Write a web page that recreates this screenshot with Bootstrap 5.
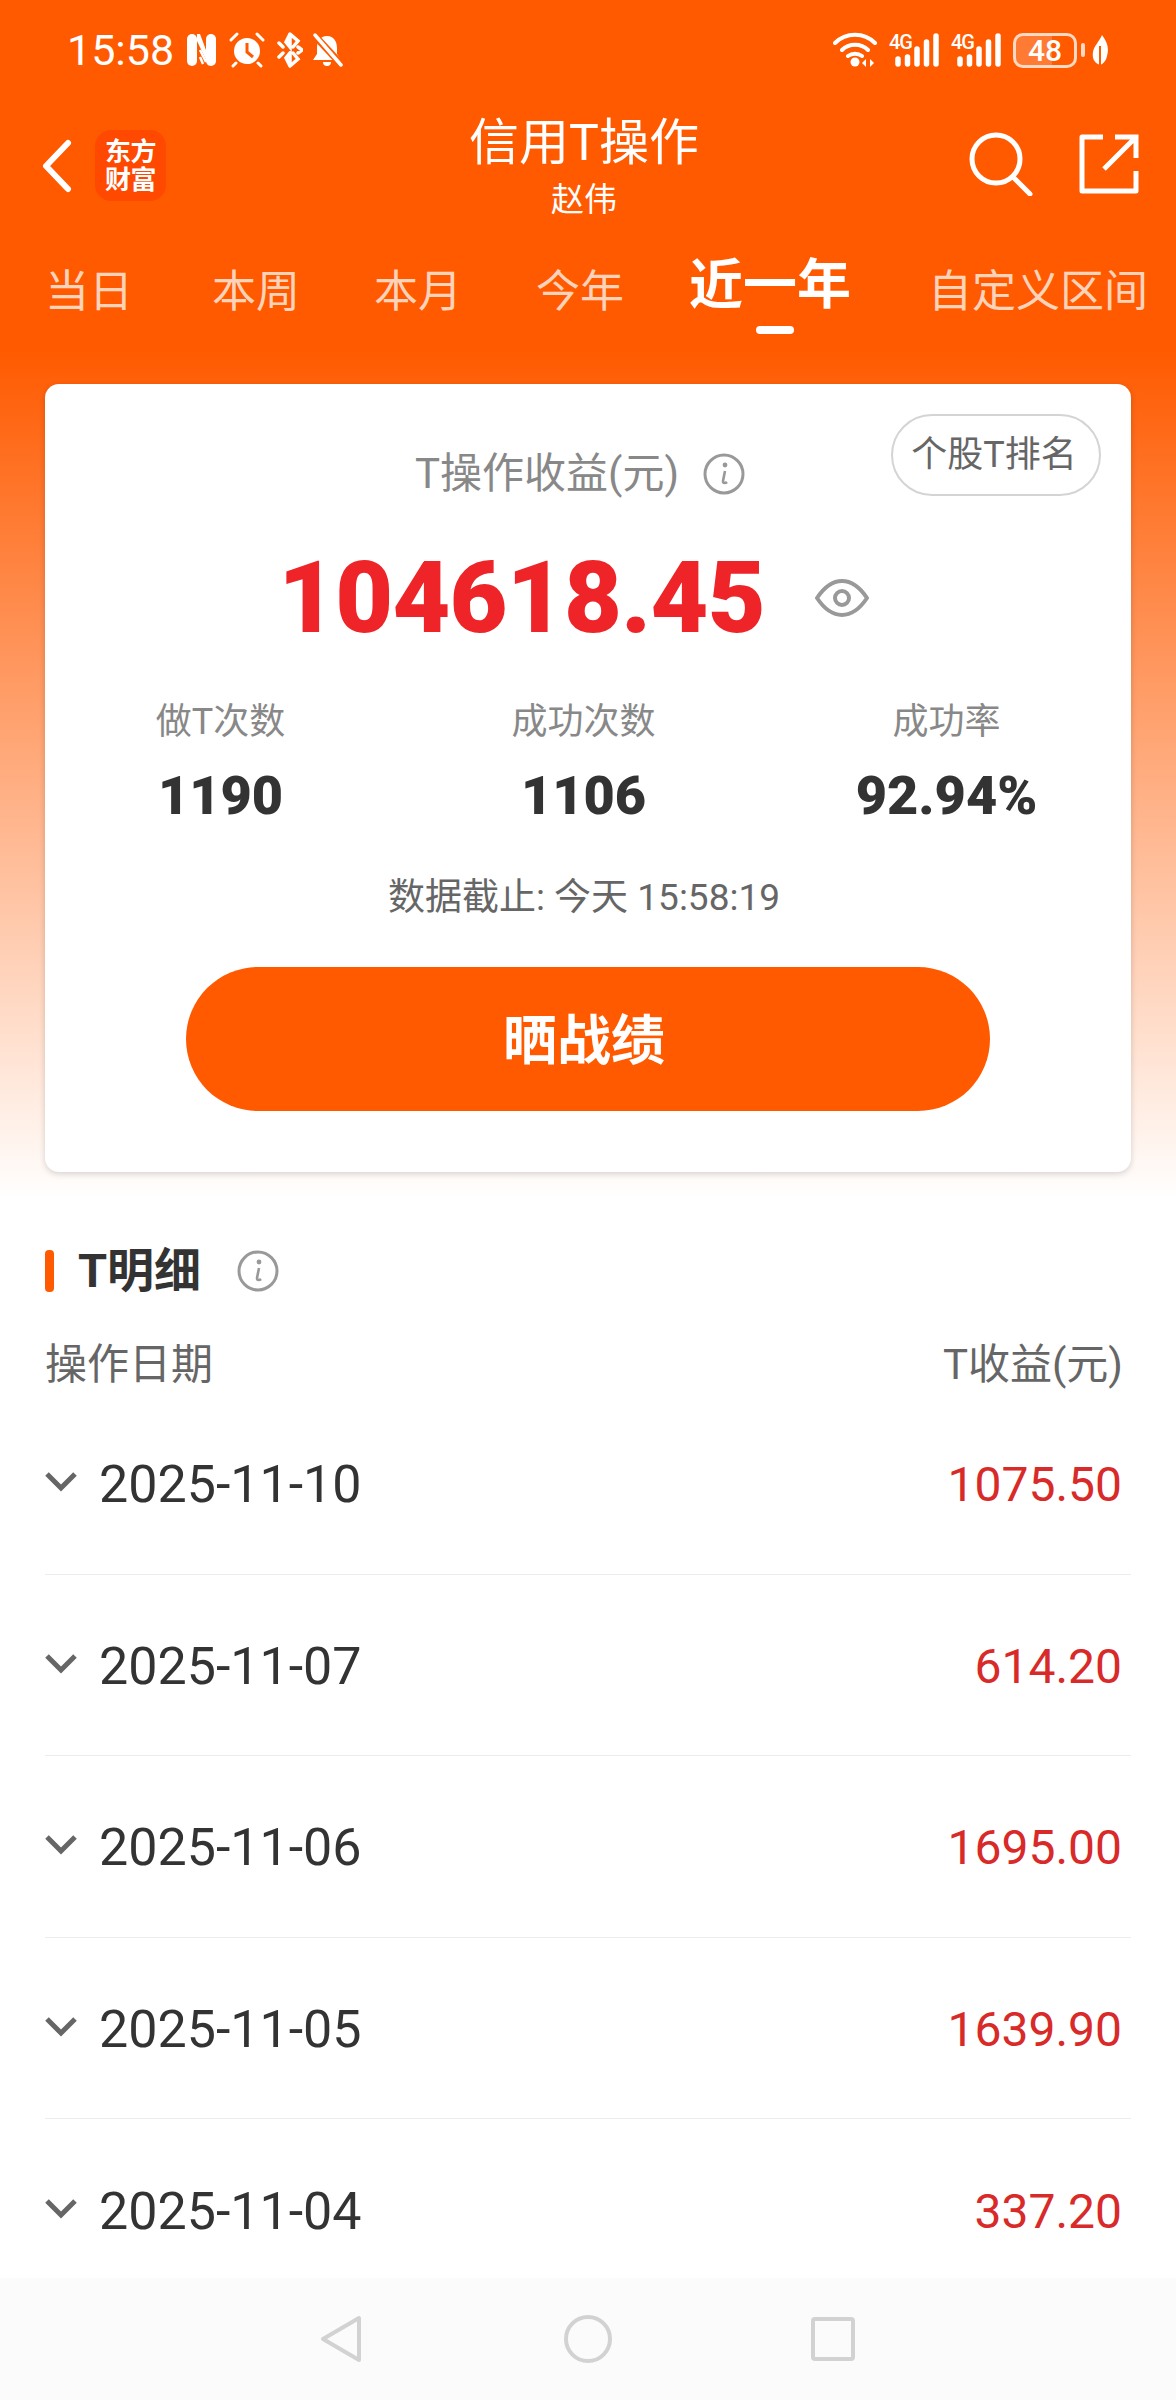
<!DOCTYPE html>
<html lang="zh-CN">
<head>
    <meta charset="UTF-8">
    <meta name="viewport" content="width=device-width, initial-scale=1.0">
    <title>信用T操作</title>
    <link rel="stylesheet" href="https://cdn.jsdelivr.net/npm/bootstrap@5.3.0/dist/css/bootstrap.min.css">
    <style>
        body {
            background: #fff;
            font-family: Roboto, "Noto Sans CJK SC", sans-serif;
            color: #333;
        }
        .phone-page {
            position: relative;
            width: 1176px;
            height: 2400px;
            overflow: hidden;
            background: linear-gradient(#ff5a00 0, #ff5a00 350px, #fff 1200px);
        }
        .status-bar {
            height: 100px;
            padding: 0 67px 0 67px;
            color: #fff;
        }
        .status-time { font-size: 43px; line-height: 1; margin-right: 12px; }
        .status-right { gap: 12px; }
        .net-block { height: 34px; width: 50px; }
        .net-label { font-size: 20px; line-height: 18px; font-weight: 500; letter-spacing: -1px; width: 24px; margin-right: -18px; }
        .battery-box {
            width: 64px;
            height: 35px;
            border: 3px solid #ffd9c4;
            border-radius: 10px;
            font-size: 30px;
            line-height: 29px;
            font-weight: 500;
            text-align: center;
            background: linear-gradient(90deg, #ff7a33 62%, transparent 62%);
        }
        .leaf-icon { margin-left: 6px; }
        .app-head {
            height: 120px;
            padding: 13px 36px 0 42px;
            color: #fff;
        }
        .app-logo {
            width: 71px;
            height: 71px;
            margin-left: 7px;
            border-radius: 16px;
            background: #ff4800;
            font-size: 26px;
            line-height: 28px;
            font-weight: 700;
            text-align: center;
            letter-spacing: -.5px;
            padding-top: 8px;
        }
        .head-title { font-size: 50px; line-height: 60px; }
        .head-sub { font-size: 33px; line-height: 40px; margin-top: 7px; }
        .head-left { width: 240px; margin-top: 17px; }
        .head-right { width: 254px; margin-top: 19px; }
        .head-search { margin-right: 46px; }
        .head-share { margin-right: 1px; }
        .range-tabs {
            height: 130px;
            padding: 42px 0 0 45px;
        }
        .range-tab { font-size: 44px; line-height: 60px; color: #ffd3ba; text-decoration: none; }
        .range-tab:nth-child(1) { margin-right: 79px; }
        .range-tab:nth-child(2) { margin-right: 74px; }
        .range-tab:nth-child(3) { margin-right: 74px; }
        .range-tab:nth-child(4) { margin-right: 65px; }
        .range-tab:nth-child(5) { margin-right: 77px; }
        .range-tab-on {
            position: relative;
            font-size: 54px;
            font-weight: 700;
            color: #fff;
            margin-top: -6px;
        }
        .range-tab-on::after {
            content: "";
            position: absolute;
            left: 67px;
            top: 70px;
            width: 38px;
            height: 8px;
            border-radius: 4px;
            background: #fff;
        }
        .score-card {
            width: 1086px;
            height: 788px;
            margin: 34px auto 0;
            padding-top: 65px;
            border: 0;
            border-radius: 14px;
            box-shadow: 0 2px 6px rgba(0, 0, 0, .16);
            text-align: center;
        }
        .rank-btn {
            position: absolute;
            top: 30px;
            right: 30px;
            width: 210px;
            height: 82px;
            padding: 0 4px 0 0;
            border: 2px solid #d4d4d4;
            border-radius: 41px;
            font-size: 36px;
            line-height: 76px;
            color: #666;
            background: #fff;
        }
        .card-title-line { font-size: 42px; line-height: 50px; color: #888; padding-right: 16px; }
        .hint-icon { width: 42px; height: 42px; margin-left: 24px; }
        .amount-line { height: 120px; margin-top: 39px; padding-right: 27px; }
        .amount-num { font-size: 100px; line-height: 120px; font-weight: 900; color: #ee2428; letter-spacing: -.8px; margin-left: -2px; margin-right: 2px; }
        .stat-name { font-size: 36px; line-height: 50px; color: #888; margin-top: 39px; }
        .stat-num { font-size: 54px; line-height: 60px; font-weight: 900; margin-top: 19px; }
        .stat-row { width: 1089px; margin: 0 0 0 -6px; }
        .cut-off { font-size: 37px; line-height: 50px; color: #666; margin-top: 47px; padding-right: 8px; }
        .share-btn {
            display: block;
            width: 804px;
            height: 144px;
            margin: 44px auto 0 141px;
            padding: 4px 8px 0 0;
            border: 0;
            border-radius: 72px;
            background: #ff5a00;
            color: #fff;
            font-size: 54px;
            font-weight: 700;
        }
        .detail-box { padding: 0 45px; }
        .detail-head { height: 60px; margin-top: 69px; }
        .detail-mark { width: 9px; height: 42px; border-radius: 4px; background: #ff5a00; margin-right: 24px; }
        .detail-title { font-size: 47px; line-height: 60px; font-weight: 700; margin-right: 36px; }
        .col-names { margin-top: 39px; padding-right: 8px; font-size: 42px; line-height: 50px; color: #666; }
        .day-list { margin-top: 3px; }
        .day-row {
            height: 181.5px;
            padding: 4px 9px 0 0;
            border-color: #ececec;
            background: transparent;
        }
        .day-arrow { width: 34px; height: 22px; margin-right: 21px; margin-left: -1px; margin-top: -6px; }
        .day-text { font-size: 52px; color: #333; }
        .day-gain { font-size: 48px; color: #d92a2a; }
        .nav-strip {
            position: absolute;
            left: 0;
            top: 2278px;
            width: 1176px;
            height: 122px;
            background: #fbfbfb;
        }
        .nav-back { left: 319px; top: 36px; }
        .nav-home { left: 563px; top: 36px; }
        .nav-recent { left: 810px; top: 38px; }
    </style>
</head>
<body>
    <div class="phone-page">
        <div class="status-bar d-flex align-items-center">
            <span class="status-time">15:58</span>
            <div class="d-flex align-items-center gap-2">
                <!-- nfc -->
                <svg width="31" height="34" viewBox="0 0 31 34"><rect x="1" y="1" width="10" height="32" rx="5" fill="#fff"/><rect x="20" y="1" width="10" height="32" rx="5" fill="#fff"/><path d="M11 1h3l9 24v8L11 8z" fill="#fff"/><path d="M14 17l6 12M14 24l3 7" stroke="#fff" stroke-width="2.5"/></svg>
                <!-- alarm -->
                <svg width="36" height="36" viewBox="0 0 36 36" class="ms-1"><circle cx="18" cy="19" r="13" fill="#fff"/><path d="M18 11v9l6 5" stroke="#ff5a00" stroke-width="3" fill="none"/><path d="M2 8l6-6M34 8l-6-6M7 31l-3 3M29 31l3 3" stroke="#fff" stroke-width="3" stroke-linecap="round"/></svg>
                <!-- bluetooth -->
                <svg width="26" height="36" viewBox="0 0 26 36" class="ms-1"><path d="M13 2v13l-4-5zM13 34V21l-4 5zM13 2l8 7-5 6M13 34l8-7-5-6M2 11l4 4M2 25l4-4M21 15l4 3-4 3" stroke="#fff" stroke-width="3.5" fill="none" stroke-linecap="round"/></svg>
                <!-- bell muted -->
                <svg width="32" height="36" viewBox="0 0 32 36"><path d="M16 4c7 0 10 6 10 12v6l4 6H2l4-6v-6C6 10 9 4 16 4zM12 30h8a4 4 0 0 1-8 0z" fill="#fff"/><path d="M3 3l27 29" stroke="#ff5a00" stroke-width="7"/><path d="M4 3l26 30" stroke="#fff" stroke-width="3.5" stroke-linecap="round"/></svg>
            </div>
            <div class="d-flex align-items-center ms-auto status-right">
                <svg width="44" height="36" viewBox="0 0 44 36"><path d="M2 11c11-11 29-11 40 0M9 18c7-7 19-7 26 0M15 24c4-3 10-3 14 0" stroke="#fff" stroke-width="4" fill="none" stroke-linecap="round"/><circle cx="22" cy="30" r="4.5" fill="#fff"/><path d="M33 27v8l-4-4zM37 27v8l4-4z" fill="#fff"/></svg>
                <div class="net-block d-flex align-items-end">
                    <span class="net-label align-self-start">4G</span>
                    <svg width="44" height="34" viewBox="0 0 44 34"><path d="M3 26v5M12.500 24v7M22 16v15M31.500 9v22M41 3v28" stroke="#fff" stroke-width="5.500" stroke-linecap="round"/></svg>
                </div>
                <div class="net-block d-flex align-items-end">
                    <span class="net-label align-self-start">4G</span>
                    <svg width="44" height="34" viewBox="0 0 44 34"><path d="M3 26v5M12.500 24v7M22 16v15M31.500 9v22M41 3v28" stroke="#fff" stroke-width="5.500" stroke-linecap="round"/></svg>
                </div>
                <div class="d-flex align-items-center">
                    <div class="battery-box">48</div>
                    <svg width="4" height="14" viewBox="0 0 4 14" class="ms-1"><rect width="4" height="14" rx="2" fill="#ffd9c4"/></svg>
                    <svg width="18" height="32" viewBox="0 0 18 32" class="leaf-icon"><path d="M11 1c6 8 7 14 5 21-1 5-4 8-7 9C3 29 1 24 2 18 3 12 8 8 11 1z" fill="#fff"/><path d="M9 12v19" stroke="#ff5a00" stroke-width="2"/></svg>
                </div>
            </div>
        </div>

        <div class="app-head d-flex justify-content-between align-items-start">
            <div class="head-left d-flex align-items-center">
                <svg width="30" height="54" viewBox="0 0 30 54" class="me-3"><path d="M26 4L4 27l22 23" stroke="#fff" stroke-width="6" fill="none" stroke-linecap="round" stroke-linejoin="round"/></svg>
                <div class="app-logo">东方<br>财富</div>
            </div>
            <div class="text-center">
                <div class="head-title">信用T操作</div>
                <div class="head-sub">赵伟</div>
            </div>
            <div class="head-right d-flex justify-content-end align-items-center">
                <svg width="64" height="64" viewBox="0 0 64 64" class="head-search"><circle cx="27" cy="27" r="24" stroke="#fff" stroke-width="5" fill="none"/><path d="M44 45l17 17" stroke="#fff" stroke-width="5" stroke-linecap="round"/></svg>
                <svg width="60" height="60" viewBox="0 0 60 60" class="head-share"><path d="M24 3H3v54h54V37" stroke="#fff" stroke-width="5" fill="none" stroke-linejoin="round"/><path d="M25 35L57 3M36 3h21v21" stroke="#fff" stroke-width="5" fill="none"/></svg>
            </div>
        </div>

        <div class="range-tabs d-flex align-items-start">
            <a class="range-tab" href="#">当日</a>
            <a class="range-tab" href="#">本周</a>
            <a class="range-tab" href="#">本月</a>
            <a class="range-tab" href="#">今年</a>
            <a class="range-tab range-tab-on" href="#">近一年</a>
            <a class="range-tab" href="#">自定义区间</a>
        </div>

        <div class="card score-card position-relative">
            <button type="button" class="btn rank-btn">个股T排名</button>
            <div class="card-title-line d-flex justify-content-center align-items-center">
                <span>T操作收益(元)</span>
                <svg class="hint-icon" viewBox="0 0 42 42"><circle cx="21" cy="21" r="19" stroke="#999" stroke-width="3" fill="none"/><circle cx="22" cy="12" r="2.4" fill="#999"/><path d="M22 18l-2 10c0 3 3 2 4 1" stroke="#999" stroke-width="2.6" fill="none"/></svg>
            </div>
            <div class="amount-line d-flex justify-content-center align-items-center">
                <span class="amount-num">104618.45</span>
                <svg width="54" height="40" viewBox="0 0 54 40" class="ms-5"><path d="M2 20C10 8 18 3 27 3s17 5 25 17c-8 12-16 17-25 17S10 32 2 20z" stroke="#999" stroke-width="4" fill="none"/><circle cx="27" cy="20" r="7" stroke="#999" stroke-width="4" fill="none"/></svg>
            </div>
            <div class="row stat-row">
                <div class="col-4">
                    <div class="stat-name">做T次数</div>
                    <div class="stat-num">1190</div>
                </div>
                <div class="col-4">
                    <div class="stat-name">成功次数</div>
                    <div class="stat-num">1106</div>
                </div>
                <div class="col-4">
                    <div class="stat-name">成功率</div>
                    <div class="stat-num">92.94%</div>
                </div>
            </div>
            <div class="cut-off">数据截止: 今天 15:58:19</div>
            <button type="button" class="btn share-btn">晒战绩</button>
        </div>

        <div class="detail-box">
            <div class="detail-head d-flex align-items-center">
                <div class="detail-mark"></div>
                <div class="detail-title">T明细</div>
                <svg width="42" height="42" viewBox="0 0 42 42"><circle cx="21" cy="21" r="19" stroke="#999" stroke-width="3" fill="none"/><circle cx="22" cy="12" r="2.4" fill="#999"/><path d="M22 18l-2 10c0 3 3 2 4 1" stroke="#999" stroke-width="2.6" fill="none"/></svg>
            </div>
            <div class="col-names d-flex justify-content-between">
                <span>操作日期</span>
                <span>T收益(元)</span>
            </div>
            <ul class="list-group list-group-flush day-list">
                <li class="list-group-item day-row d-flex align-items-center">
                    <svg class="day-arrow" viewBox="0 0 34 22"><path d="M3 3l14 14L31 3" stroke="#666" stroke-width="5" fill="none"/></svg>
                    <span class="day-text">2025-11-10</span>
                    <span class="day-gain ms-auto">1075.50</span>
                </li>
                <li class="list-group-item day-row d-flex align-items-center">
                    <svg class="day-arrow" viewBox="0 0 34 22"><path d="M3 3l14 14L31 3" stroke="#666" stroke-width="5" fill="none"/></svg>
                    <span class="day-text">2025-11-07</span>
                    <span class="day-gain ms-auto">614.20</span>
                </li>
                <li class="list-group-item day-row d-flex align-items-center">
                    <svg class="day-arrow" viewBox="0 0 34 22"><path d="M3 3l14 14L31 3" stroke="#666" stroke-width="5" fill="none"/></svg>
                    <span class="day-text">2025-11-06</span>
                    <span class="day-gain ms-auto">1695.00</span>
                </li>
                <li class="list-group-item day-row d-flex align-items-center">
                    <svg class="day-arrow" viewBox="0 0 34 22"><path d="M3 3l14 14L31 3" stroke="#666" stroke-width="5" fill="none"/></svg>
                    <span class="day-text">2025-11-05</span>
                    <span class="day-gain ms-auto">1639.90</span>
                </li>
                <li class="list-group-item day-row d-flex align-items-center">
                    <svg class="day-arrow" viewBox="0 0 34 22"><path d="M3 3l14 14L31 3" stroke="#666" stroke-width="5" fill="none"/></svg>
                    <span class="day-text">2025-11-04</span>
                    <span class="day-gain ms-auto">337.20</span>
                </li>
            </ul>
        </div>

        <div class="nav-strip">
            <svg width="44" height="50" viewBox="0 0 44 50" class="position-absolute nav-back"><path d="M40 4v42L4 25z" stroke="#d2d2d2" stroke-width="4" fill="none" stroke-linejoin="round"/></svg>
            <svg width="50" height="50" viewBox="0 0 50 50" class="position-absolute nav-home"><circle cx="25" cy="25" r="22" stroke="#d2d2d2" stroke-width="4" fill="none"/></svg>
            <svg width="46" height="46" viewBox="0 0 46 46" class="position-absolute nav-recent"><rect x="3" y="3" width="40" height="40" rx="2" stroke="#d2d2d2" stroke-width="4" fill="none"/></svg>
        </div>
    </div>
    <script src="https://cdn.jsdelivr.net/npm/bootstrap@5.3.0/dist/js/bootstrap.bundle.min.js"></script>
</body>
</html>
